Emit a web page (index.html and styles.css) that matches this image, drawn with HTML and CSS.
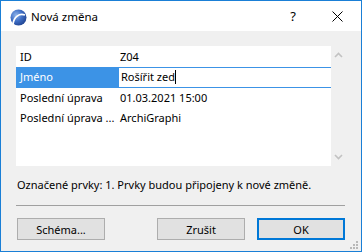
FILE: index.html
```html
<!DOCTYPE html>
<html>
<head>
    <title>Nová změna</title>
    <link rel="stylesheet" href="styles.css">
</head>
<body>
    <div class="window">
        <div class="titlebar">
            <svg class="app-icon" width="17" height="17" viewBox="0 0 17 17">
                <defs>
                    <radialGradient id="ball" cx="0.35" cy="0.35" r="0.75">
                        <stop offset="0" stop-color="#8fb4ea"/>
                        <stop offset="0.5" stop-color="#3f6fc6"/>
                        <stop offset="1" stop-color="#1d3f8c"/>
                    </radialGradient>
                </defs>
                <circle cx="8.5" cy="8.5" r="8" fill="url(#ball)"/>
                <path d="M3 15 C4 8 9 4 15 6" stroke="#fff" stroke-width="1.8" fill="none"/>
            </svg>
            <span class="title">Nová změna</span>
            <span class="help">?</span>
            <svg class="close" width="11" height="11" viewBox="0 0 11 11">
                <path d="M0.5 0.5 L10.5 10.5 M10.5 0.5 L0.5 10.5" stroke="#000" stroke-width="1"/>
            </svg>
        </div>

        <div class="content">
            <!-- tabulka vlastností -->
            <div class="list">
                <div class="rows">
                    <div class="row">
                        <div class="label">ID</div>
                        <div class="value">Z04</div>
                    </div>
                    <div class="row selected">
                        <div class="label">Jméno</div>
                        <div class="value edit">Rošířit zed<span class="caret"></span></div>
                    </div>
                    <div class="row">
                        <div class="label">Poslední úprava</div>
                        <div class="value">01.03.2021 15:00</div>
                    </div>
                    <div class="row">
                        <div class="label">Poslední úprava ...</div>
                        <div class="value">ArchiGraphi</div>
                    </div>
                </div>
                <div class="scrollbar">
                    <svg width="9" height="6" viewBox="0 0 9 6"><path d="M1 5 L4.5 1.5 L8 5" stroke="#c2c2c2" stroke-width="1.6" fill="none"/></svg>
                    <svg width="9" height="6" viewBox="0 0 9 6"><path d="M1 1 L4.5 4.5 L8 1" stroke="#c2c2c2" stroke-width="1.6" fill="none"/></svg>
                </div>
            </div>

            <div class="message">Označené prvky: 1. Prvky budou připojeny k nové změně.</div>

            <div class="separator"></div>

            <div class="buttons">
                <button class="btn">Schéma...</button>
                <div class="btn-group">
                    <button class="btn">Zrušit</button>
                    <button class="btn default">OK</button>
                </div>
            </div>
        </div>

        <div class="grip">
            <span></span><span></span><span></span>
            <span></span><span></span><span></span>
        </div>
    </div>
</body>
</html>
```

FILE: styles.css
```css
body {
    margin: 0;
    font-family: "Noto Sans", "Open Sans", sans-serif;
    font-size: 11px;
    color: #000;
}
.window {
    position: relative;
    width: 362px;
    height: 252px;
    box-sizing: border-box;
    border: 1px solid #1a7fd6;
    background: #f0f0f0;
    display: flex;
    flex-direction: column;
}

/* titulek okna */
.titlebar {
    height: 30px;
    background: #fff;
    display: flex;
    align-items: center;
}
.app-icon {
    margin-left: 9px;
    margin-top: 2px;
}
.title {
    margin-left: 4px;
    font-size: 11.5px;
    flex: 1;
}
.help {
    margin-right: 36px;
    font-size: 13px;
}
.close {
    margin-right: 18px;
}

.content {
    flex: 1;
    display: flex;
    flex-direction: column;
}

/* seznam */
.list {
    margin: 15px 15px 0 15px;
    height: 120px;
    display: flex;
}
.rows {
    flex: 1;
    background: #fff;
    padding-top: 1px;
}
.row {
    display: flex;
    height: 20px;
    line-height: 19px;
}
.label {
    width: 103px;
    padding-left: 4px;
    box-sizing: border-box;
    white-space: nowrap;
}
.value {
    flex: 1;
    padding-left: 1px;
    white-space: nowrap;
}
.row.selected {
    height: 21px;
}
.row.selected .label {
    background: #3c93e6;
    color: #fff;
}
.value.edit {
    border-top: 1px solid #3c93e6;
    border-bottom: 1px solid #3c93e6;
    padding-left: 2px;
    line-height: 18px;
}
.caret {
    display: inline-block;
    width: 1px;
    height: 14px;
    background: #000;
    vertical-align: -3px;
}
.scrollbar {
    width: 15px;
    display: flex;
    flex-direction: column;
    justify-content: space-between;
    align-items: center;
    padding: 6px 0 6px 0;
}

.message {
    margin: 11px 0 0 16px;
    line-height: 16px;
}
.separator {
    margin: 12px 16px 0 15px;
    height: 1px;
    background: #a0a0a0;
}

/* tlačítka */
.buttons {
    margin: 12px 16px 0 16px;
    display: flex;
    justify-content: space-between;
}
.btn-group {
    display: flex;
    gap: 12px;
}
.btn {
    width: 88px;
    height: 22px;
    font-family: "Noto Sans", "Open Sans", sans-serif;
    font-size: 11px;
    background: #e1e1e1;
    border: 1px solid #adadad;
    padding: 0;
    color: #000;
}
.btn.default {
    border: 2px solid #0078d7;
}

.grip {
    position: absolute;
    right: 3px;
    bottom: 2px;
    width: 9px;
    height: 9px;
}
.grip span {
    position: absolute;
    width: 2px;
    height: 2px;
    background: #b8b8b8;
}
.grip span:nth-child(1) { right: 0; bottom: 0; }
.grip span:nth-child(2) { right: 3px; bottom: 0; }
.grip span:nth-child(3) { right: 6px; bottom: 0; }
.grip span:nth-child(4) { right: 0; bottom: 3px; }
.grip span:nth-child(5) { right: 3px; bottom: 3px; }
.grip span:nth-child(6) { right: 0; bottom: 6px; }
```
